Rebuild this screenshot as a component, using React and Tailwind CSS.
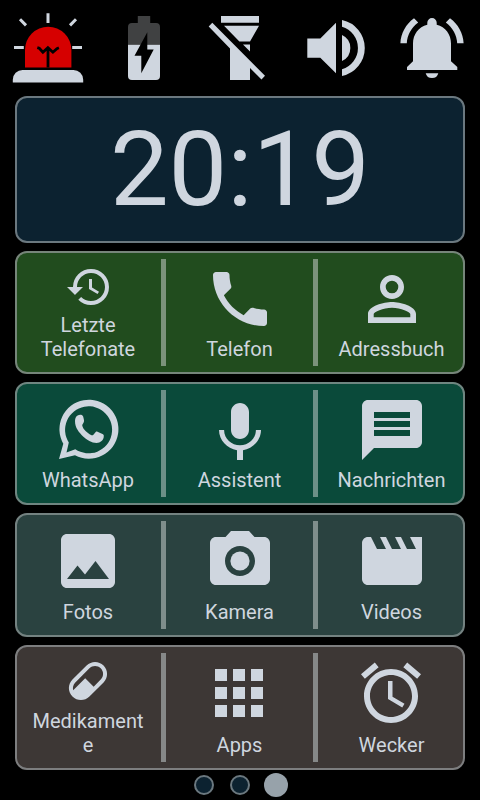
import React from "react";
import {
  MdHistory,
  MdPhone,
  MdPersonOutline,
  MdMic,
  MdMessage,
  MdImage,
  MdPhotoCamera,
  MdMovie,
  MdApps,
} from "react-icons/md";

const TopSvg = ({ children, label }) => (
  <svg viewBox="0 0 96 96" className="h-24 w-24" fill="currentColor" role="img" aria-label={label}>
    {children}
  </svg>
);

const Siren = () => (
  <TopSvg label="SOS">
    <path fill="#d60000" d="M25 67.5V50a23.2 23.2 0 0 1 46.4 0v17.5z" />
    <path d="M12.8 82.4v-2.6a9.8 9.8 0 0 1 9.8-9.8h50.8a9.8 9.8 0 0 1 9.8 9.8v2.6z" />
    <path
      fill="none"
      stroke="currentColor"
      strokeWidth="3"
      d="M48 13.2v9.8M14 47.4h9.8M72.2 47.4H82M20 19.2l6 6.2M76 19.2l-6 6.2"
    />
    <path
      fill="none"
      stroke="#000"
      strokeWidth="2.8"
      d="M48 67.5V48M37.3 47.6l2 .6 3.6 4 5-4.6 5 4.6 4-3.6 2-.8"
    />
  </TopSvg>
);

const Battery = () => (
  <TopSvg label="Akku">
    <path fill="#404142" d="M41.8 16h12.4v7H60a4 4 0 0 1 4 4v17.7H32V27a4 4 0 0 1 4-4h5.8z" />
    <path d="M32 44.7h32V76a4 4 0 0 1-4 4H36a4 4 0 0 1-4-4z" />
    <path fill="#000" d="M51.3 32.3v17.2h6.4L45.3 73.3V55.8h-6.8z" />
  </TopSvg>
);

const Flashlight = () => (
  <TopSvg label="Taschenlampe">
    <path d="M29 16h38v6.8H29zM32 25.7h35l-9 15.8H47.4zM51 44.6h7v7zM20.3 22.7 73 75.8l-3.5 3.6L58 68v12H38V48.4L16.7 26.4z" />
  </TopSvg>
);

const Speaker = () => (
  <TopSvg label="Lautstärke">
    <path d="M19.3 38.4h13L48 22.7v50.6L32.3 57.7h-13zM54 35a14.3 14.3 0 0 1 0 26zM54 20a28.6 28.6 0 0 1 0 56v-6.7a22.2 22.2 0 0 0 0-42.6z" />
  </TopSvg>
);

const Bell = () => (
  <TopSvg label="Klingelton">
    <path d="M43.3 24.8v-2.1a4.7 4.7 0 0 1 9.4 0v2.1C61.5 27 67 34.5 67 43.5v17.8l6.3 5.8V70H23v-2.9l6-5.8V43.5C29 34.5 34.5 27 43.3 24.8zM41.7 73.2h12.6a6.5 6.5 0 0 1-12.6 0zM16.4 43.3C16.8 33.5 22 24 30 18.3l4.2 4.1C27.3 27.5 23.2 35 22.8 43.3zM79.6 43.3C79.2 33.5 74 24 66 18.3l-4.2 4.1C68.7 27.5 72.8 35 73.2 43.3z" />
  </TopSvg>
);

const WhatsApp = ({ className }) => (
  <svg viewBox="0 0 72 72" className={className} fill="currentColor">
    <path
      fillRule="evenodd"
      d="M6 65 10.3 49.8A29.5 29.5 0 1 1 22 61.2zM13.5 58.4 22.3 55.2A23.5 23.5 0 1 0 15.8 48.5z"
    />
    <path d="M22 27c.1-3 1-4.8 2.6-5.6 1.5-.6 3-.7 4.2-.3 1 .5 1.3 1.2 1.6 2.3.7 2.5.9 3.7.1 5.3L29.2 31c.2 1.6.9 3.2 2 4.4 2 2.3 4.8 4.5 7.3 5.8.8.3 1.3.2 1.9-.4l2.3-2.7c.6-.6 1-.6 1.8-.3l5.5 2.5c.6.4.8.8.8 1.4 0 2.3-.7 4.2-2.2 5.4-1.5 1.2-3.1 1.9-5 1.9-5.2-.2-9.6-2.9-13.5-6.6-3.9-3.8-8.2-8.5-8.1-15.4z" />
  </svg>
);

const Pill = ({ className }) => (
  <svg viewBox="0 0 24 24" className={className} fill="currentColor">
    <path d="M4.22 11.29l7.07-7.07C13.64 1.88 17.43 1.88 19.78 4.22C22.12 6.56 22.12 10.36 19.78 12.71L12.71 19.78C10.36 22.12 6.56 22.12 4.22 19.78C1.88 17.43 1.88 13.64 4.22 11.29M5.64 12.71C4.59 13.75 4.24 15.24 4.6 16.57L10.59 10.59L14.83 14.83L18.36 11.29C19.93 9.73 19.93 7.2 18.36 5.64C16.8 4.07 14.27 4.07 12.71 5.64Z" />
  </svg>
);

const AlarmClock = ({ className }) => (
  <svg viewBox="0 0 24 24" className={className} fill="currentColor">
    <path d="M22 5.72l-4.6-3.86-1.29 1.53 4.6 3.86L22 5.72zM7.88 3.39L6.6 1.86 2 5.71l1.29 1.53 4.59-3.85zM12.5 8H11v6l4.75 2.85.75-1.23-4-2.37V8zM12 4c-4.97 0-9 4.03-9 9s4.02 9 9 9c4.97 0 9-4.03 9-9s-4.03-9-9-9zm0 16c-3.87 0-7-3.13-7-7s3.13-7 7-7 7 3.13 7 7-3.13 7-7 7z" />
  </svg>
);

const rows = [
  {
    card: "h-[123px] bg-[#214c1e] border-[#76857a]",
    line: "bg-[#7b927b]",
    bottom: "pb-[11px]",
    tiles: [
      { label: "Letzte Telefonate", Icon: MdHistory, size: "size-12 ml-0.5" },
      { label: "Telefon", Icon: MdPhone, size: "size-[72px]" },
      { label: "Adressbuch", Icon: MdPersonOutline, size: "size-[72px]" },
    ],
  },
  {
    card: "h-[123px] bg-[#0a4a3a] border-[#6f8681]",
    line: "bg-[#6c9087]",
    bottom: "pb-[11px]",
    tiles: [
      { label: "WhatsApp", Icon: WhatsApp, size: "size-[72px] ml-0.5" },
      { label: "Assistent", Icon: MdMic, size: "size-[72px] mt-[3px] -mb-[3px]" },
      { label: "Nachrichten", Icon: MdMessage, size: "size-[72px]" },
    ],
  },
  {
    card: "h-[124px] bg-[#2a4240] border-[#748281]",
    line: "bg-[#7f8e8c]",
    bottom: "pb-[11px]",
    tiles: [
      { label: "Fotos", Icon: MdImage, size: "size-[72px]" },
      { label: "Kamera", Icon: MdPhotoCamera, size: "size-[72px]" },
      { label: "Videos", Icon: MdMovie, size: "size-[72px]" },
    ],
  },
  {
    card: "h-[125px] bg-[#3d3735] border-[#7d7e7f]",
    line: "bg-[#868888]",
    bottom: "pb-[11px]",
    tiles: [
      { label: "Medikamente", Icon: Pill, size: "size-12" },
      { label: "Apps", Icon: MdApps, size: "size-[72px] mr-px" },
      { label: "Wecker", Icon: AlarmClock, size: "size-[72px] mr-px" },
    ],
  },
];

function Tile({ label, Icon, size, pad }) {
  return (
    <button className={`flex h-full min-w-0 flex-col items-center justify-between pt-[10px] ${pad}`}>
      <Icon className={`${size} shrink-0`} />
      <span className="w-full text-center text-[20px] leading-6 break-words">{label}</span>
    </button>
  );
}

function Row({ card, line, bottom, tiles }) {
  return (
    <section
      className={`grid grid-cols-[144px_5px_147px_5px_145px] rounded-xl border-2 ${card}`}
    >
      <Tile {...tiles[0]} pad={`pl-3 pr-[14px] ${bottom}`} />
      <div className={`my-1.5 ${line}`} />
      <Tile {...tiles[1]} pad={`px-3 ${bottom}`} />
      <div className={`my-1.5 ${line}`} />
      <Tile {...tiles[2]} pad={`pl-[14px] pr-3 ${bottom}`} />
    </section>
  );
}

export default function App() {
  return (
    <div className="flex h-[800px] w-[480px] flex-col overflow-hidden bg-black font-['Roboto',sans-serif] text-[#cfd6df]">
      <header className="grid h-24 shrink-0 grid-cols-5">
        <Siren />
        <Battery />
        <Flashlight />
        <Speaker />
        <Bell />
      </header>
      <main className="flex flex-col gap-2 px-[15px]">
        <section className="flex h-[147px] items-center justify-center rounded-xl border-2 border-[#6b787f] bg-[#0c2230] pt-0.5">
          <time className="text-[104.5px] leading-none">20:19</time>
        </section>
        {rows.map((row) => (
          <Row key={row.tiles[0].label} {...row} />
        ))}
      </main>
      <nav className="flex h-[30px] items-center justify-center">
        <span className="mr-4 size-5 rounded-full border-2 border-[#6b787f] bg-[#0c2230]" />
        <span className="mr-[14px] size-5 rounded-full border-2 border-[#6b787f] bg-[#0c2230]" />
        <span className="mr-[-2px] size-6 rounded-full bg-[#97a2aa]" />
      </nav>
    </div>
  );
}
